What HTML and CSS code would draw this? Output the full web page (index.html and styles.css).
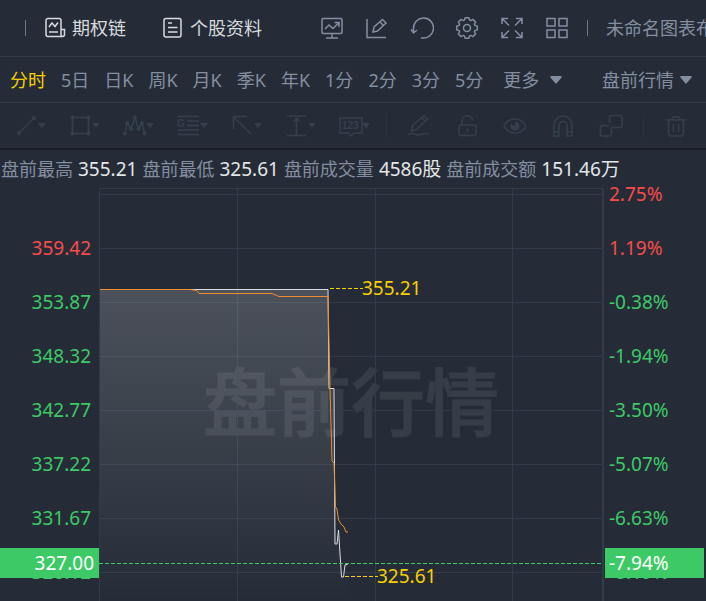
FILE: index.html
```html
<!DOCTYPE html>
<html lang="zh-CN">
<head>
    <meta charset="UTF-8">
    <meta name="viewport" content="width=device-width, initial-scale=1">
    <title>盘前行情</title>
    <link rel="stylesheet" href="styles.css">
</head>
<body>
    <header class="topbar">
        <span class="divider"></span>
        <a class="top-link link-chain" href="#chain">
            <svg class="icon" width="22" height="22" viewBox="0 0 22 22">
                <path d="M17 12V3.500a2 2 0 0 0-2-2H4a2 2 0 0 0-2 2v14a2 2 0 0 0 2 2h14.500a2 2 0 0 0 2-2V12.500H17v5a2 2 0 0 0 2 2"/>
                <path d="M5 10l3-4 3 3.500 3-4M5 15h9"/>
            </svg>
            期权链
        </a>
        <a class="top-link" href="#info">
            <svg class="icon" width="22" height="22" viewBox="0 0 22 22">
                <rect x="2" y="1.500" width="17" height="18.500" rx="2"/>
                <path d="M6 6h4M6 10.500h9.500M6 15h9.500"/>
            </svg>
            个股资料
        </a>
        <div class="top-icons">
            <button class="icon-btn" aria-label="行情看板">
                <svg class="icon" width="24" height="24" viewBox="0 0 24 24">
                    <rect x="2" y="2.500" width="20" height="15" rx="1"/>
                    <path d="M5 13l4-4 4 3.500L18.500 7M14.500 6.500H19V11M12 17.500V22M6 22h12"/>
                </svg>
            </button>
            <button class="icon-btn" aria-label="画线">
                <svg class="icon" width="24" height="24" viewBox="0 0 24 24">
                    <path d="M2 3v18.500h19M8 16l1-5L17.500 3.500l3.500 3.500L12.500 15 8 16zM15 6l3.500 3.500"/>
                </svg>
            </button>
            <button class="icon-btn" aria-label="刷新">
                <svg class="icon" width="24" height="24" viewBox="0 0 24 24">
                    <path d="M3.500 16V12.500A10 10 0 1 1 11 21.700M1 13.500l2.500 3.500L7 14"/>
                </svg>
            </button>
            <button class="icon-btn" aria-label="设置">
                <svg class="icon" width="24" height="24" viewBox="0 0 24 24">
                    <path stroke-linejoin="round" transform="translate(12 12)" d="M10.300-1.800V1.800L7.900 2.600 7.400 3.800 8.600 6 6 8.600 3.800 7.400 2.600 7.900 1.800 10.300H-1.800L-2.600 7.900-3.800 7.400-6 8.600-8.600 6-7.400 3.800-7.900 2.600-10.300 1.800V-1.800L-7.900-2.600-7.400-3.800-8.600-6-6-8.600-3.800-7.400-2.600-7.900-1.800-10.300H1.800L2.600-7.900 3.800-7.400 6-8.600 8.600-6 7.400-3.800 7.900-2.600z"/>
                    <circle cx="12" cy="12" r="3.500"/>
                </svg>
            </button>
            <button class="icon-btn" aria-label="全屏">
                <svg class="icon" width="24" height="24" viewBox="0 0 24 24">
                    <path d="M2 8V2.500h6M2.500 3l6.500 6.500M16 2.500h6V8M21.500 3L15 9.500M2 16v5.500h6M2.500 21L9 14.500M22 16v5.500h-6M21.500 21L15 14.500"/>
                </svg>
            </button>
            <button class="icon-btn" aria-label="多图">
                <svg class="icon" width="24" height="24" viewBox="0 0 24 24">
                    <path d="M2 2.500h8v7.500H2zM14 2.500h8v7.500h-8zM2 14h8v7.500H2zM14 14h8v7.500h-8z"/>
                </svg>
            </button>
        </div>
        <span class="divider"></span>
        <span class="layout-name">未命名图表布局</span>
    </header>

    <nav class="periods">
        <button class="period active">分时</button>
        <button class="period">5日</button>
        <button class="period">日K</button>
        <button class="period">周K</button>
        <button class="period">月K</button>
        <button class="period">季K</button>
        <button class="period">年K</button>
        <button class="period">1分</button>
        <button class="period">2分</button>
        <button class="period">3分</button>
        <button class="period">5分</button>
        <button class="period more">更多
            <svg class="arrow" width="12" height="8" viewBox="0 0 12 8"><path d="M1 0h10l1 1-6 7-6-7z"/></svg>
        </button>
        <button class="period session">盘前行情
            <svg class="arrow" width="12" height="8" viewBox="0 0 12 8"><path d="M1 0h10l1 1-6 7-6-7z"/></svg>
        </button>
    </nav>

    <div class="tools">
        <div class="draw-tools">
            <button class="tool" aria-label="线段">
                <svg class="icon" width="24" height="24" viewBox="0 0 24 24">
                    <path d="M4 19L19 4"/><circle class="dot" cx="4" cy="19" r="2"/><circle class="dot" cx="19" cy="4" r="2"/>
                </svg>
                <svg class="caret" width="8" height="5" viewBox="0 0 8 5"><path d="M0 0h8L4 5z"/></svg>
            </button>
            <button class="tool" aria-label="矩形">
                <svg class="icon" width="24" height="24" viewBox="0 0 24 24">
                    <rect x="3.500" y="3.500" width="16" height="16"/>
                    <circle class="dot" cx="3.500" cy="3.500" r="2"/><circle class="dot" cx="19.500" cy="3.500" r="2"/>
                    <circle class="dot" cx="3.500" cy="19.500" r="2"/><circle class="dot" cx="19.500" cy="19.500" r="2"/>
                </svg>
                <svg class="caret" width="8" height="5" viewBox="0 0 8 5"><path d="M0 0h8L4 5z"/></svg>
            </button>
            <button class="tool" aria-label="波浪">
                <svg class="icon" width="24" height="24" viewBox="0 0 24 24">
                    <path d="M2 19.500L4 9l4 6 4-12 3.500 12L19 9l2.500 10.500"/>
                    <circle class="dot" cx="2" cy="19.500" r="2"/><circle class="dot" cx="4" cy="9" r="2"/>
                    <circle class="dot" cx="8" cy="15" r="2"/><circle class="dot" cx="12" cy="3.500" r="2"/>
                    <circle class="dot" cx="15.500" cy="15" r="2"/><circle class="dot" cx="19" cy="9" r="2"/>
                    <circle class="dot" cx="21.500" cy="19.500" r="2"/>
                </svg>
                <svg class="caret" width="8" height="5" viewBox="0 0 8 5"><path d="M0 0h8L4 5z"/></svg>
            </button>
            <button class="tool" aria-label="江恩">
                <svg class="icon" width="24" height="24" viewBox="0 0 24 24">
                    <path d="M1 2.500h21M10 7h12M10 11.500h12M1 16h21M1 20.500h21"/>
                    <text class="glyph" x="0" y="13" font-size="10">G</text>
                </svg>
                <svg class="caret" width="8" height="5" viewBox="0 0 8 5"><path d="M0 0h8L4 5z"/></svg>
            </button>
            <button class="tool" aria-label="箭头">
                <svg class="icon" width="24" height="24" viewBox="0 0 24 24">
                    <path d="M20 20L2 2.500M2.500 15V2.500H16"/>
                </svg>
                <svg class="caret" width="8" height="5" viewBox="0 0 8 5"><path d="M0 0h8L4 5z"/></svg>
            </button>
            <button class="tool" aria-label="测量">
                <svg class="icon" width="24" height="24" viewBox="0 0 24 24">
                    <path d="M2 2h19M2 21.500h19M11.500 4v17"/><path class="dot" d="M11.500 3l4 4.500h-8z"/>
                </svg>
                <svg class="caret" width="8" height="5" viewBox="0 0 8 5"><path d="M0 0h8L4 5z"/></svg>
            </button>
            <button class="tool" aria-label="标注">
                <svg class="icon" width="24" height="24" viewBox="0 0 24 24">
                    <path d="M1 4h22v15h-8l-3 3-3-3H1z"/>
                    <text class="glyph" x="3" y="15" font-size="10">123</text>
                </svg>
                <svg class="caret" width="8" height="5" viewBox="0 0 8 5"><path d="M0 0h8L4 5z"/></svg>
            </button>
        </div>
        <span class="tool-divider"></span>
        <div class="edit-tools">
            <button class="tool" aria-label="连续画线">
                <svg class="icon" width="24" height="24" viewBox="0 0 24 24">
                    <path d="M4.500 17l1-5.500L17 1.500l3.500 3.500L9.500 15.500zM15 4l3.500 3.500M1.500 20.500c5-3 7 .5 10 .5s5-3 10-.5"/>
                </svg>
            </button>
            <button class="tool" aria-label="锁定">
                <svg class="icon" width="24" height="24" viewBox="0 0 24 24">
                    <rect x="4" y="11" width="17" height="10.500" rx="2"/><path d="M7 11V7.500a5 5 0 0 1 10.500-1M12.500 14.500v3.500"/>
                </svg>
            </button>
            <button class="tool" aria-label="显示">
                <svg class="icon" width="24" height="24" viewBox="0 0 24 24">
                    <path d="M1 12c5-9.500 17-9.500 22 0-5 9.500-17 9.500-22 0z"/>
                    <path class="dot" d="M12 11V7.500a4.500 4.500 0 1 1-4 2.500c1 1 2.500 1.500 4 1z"/>
                </svg>
            </button>
            <button class="tool" aria-label="吸附">
                <svg class="icon" width="24" height="24" viewBox="0 0 24 24">
                    <path d="M3 22V11a9 9 0 0 1 18 0v11h-5V11.500a4 4 0 0 0-8 0V22zM3 18h5M16 18h5"/>
                </svg>
            </button>
            <button class="tool" aria-label="同步">
                <svg class="icon" width="24" height="24" viewBox="0 0 24 24">
                    <path d="M10.500 9V3.500a2 2 0 0 1 2-2H21a2 2 0 0 1 2 2v8a2 2 0 0 1-2 2h-8.500M10 11.500H3.500a2 2 0 0 0-2 2v6.500a2 2 0 0 0 2 2h7a2 2 0 0 0 2-2v-6.500"/>
                </svg>
            </button>
        </div>
        <span class="tool-divider"></span>
        <button class="tool" aria-label="删除">
            <svg class="icon" width="24" height="24" viewBox="0 0 24 24">
                <path d="M2 6h20M8 6l1-3h6l1 3M4.500 6v13a3 3 0 0 0 3 3h9a3 3 0 0 0 3-3V6M9.500 10v8M14.500 10v8"/>
            </svg>
        </button>
    </div>

    <dl class="summary">
        <dt>盘前最高</dt><dd>355.21</dd>
        <dt>盘前最低</dt><dd>325.61</dd>
        <dt>盘前成交量</dt><dd>4586股</dd>
        <dt>盘前成交额</dt><dd>151.46万</dd>
    </dl>

    <main class="chart">
        <div class="axis axis-price">
            <ul class="ticks">
                <li class="up"></li>
                <li class="up">359.42</li>
                <li>353.87</li>
                <li>348.32</li>
                <li>342.77</li>
                <li>337.22</li>
                <li>331.67</li>
                <li>326.12</li>
            </ul>
            <span class="tag">327.00</span>
        </div>

        <svg class="plot" viewBox="0 0 505 413" role="img" aria-label="分时走势">
            <defs>
                <linearGradient id="area" x1="0" y1="0" x2="0" y2="1">
                    <stop offset="0" stop-color="#fff" stop-opacity=".18"/>
                    <stop offset="1" stop-color="#fff" stop-opacity="0"/>
                </linearGradient>
            </defs>
            <text class="watermark" x="104" y="242">盘前行情</text>
            <!-- grid -->
            <path class="grid" d="M0 .5H505M0 6.500H505M0 60.500H505M0 114.500H505M0 168.500H505M0 222.500H505M0 276.500H505M0 330.500H505M0 384.500H505"/>
            <path class="grid" d="M.5 0V413M138.500 0V413M276.500 0V413M413.500 0V413M503.500 0V413M504.500 0V413"/>
            <!-- price -->
            <path fill="url(#area)" d="M1 101.500H229L230 200.500H235L237 356H239L240 342L243 389H245L247 377L249 376V413H1z"/>
            <path class="line price" d="M1 101.500H229L230 200.500H235L236 356H238L239.500 342L242.500 389H244.500L246 377L249 376"/>
            <!-- average -->
            <path class="line average" d="M1 101.500H91L98 102.500L100 105.500H173L180 108.500H229L231 200L233 273L235 275L236.500 319L238 321L239.500 332L242 336L245 339L247 344H249"/>
            <!-- last price, high and low -->
            <path class="last" d="M0 375.500H503"/>
            <path class="mark" d="M231 100.500H264M246 388.500H279"/>
            <text class="mark-text" x="263" y="107">355.21</text>
            <text class="mark-text" x="278" y="395">325.61</text>
        </svg>

        <div class="axis axis-percent">
            <ul class="ticks">
                <li class="up">2.75%</li>
                <li class="up">1.19%</li>
                <li>-0.38%</li>
                <li>-1.94%</li>
                <li>-3.50%</li>
                <li>-5.07%</li>
                <li>-6.63%</li>
                <li>-8.19%</li>
            </ul>
            <span class="tag">-7.94%</span>
        </div>
    </main>
</body>
</html>
```

FILE: styles.css
```css
* {
    box-sizing: border-box;
}

body {
    margin: 0;
    background-color: #252c37;
    color: #848ea1;
    font-family: "Noto Sans", "Noto Sans CJK SC", sans-serif;
    font-size: 18px;
    line-height: 24px;
    overflow: hidden;
}

button {
    padding: 0;
    border: 0;
    background: none;
    color: inherit;
    font: inherit;
    white-space: nowrap;
    cursor: pointer;
}

.icon {
    display: block;
    flex-shrink: 0;
    fill: none;
    stroke: currentColor;
    stroke-width: 1.5;
}

/* top bar */
.topbar {
    display: flex;
    align-items: center;
    height: 57px;
    padding-left: 25px;
    border-bottom: 1px solid #303c49;
    white-space: nowrap;
}

.divider {
    flex-shrink: 0;
    width: 1px;
    height: 16px;
    background-color: #6d7788;
}

.top-link {
    display: flex;
    align-items: center;
    gap: 6px;
    margin-left: 36px;
    color: #d7dade;
    text-decoration: none;
}

.link-chain {
    margin-left: 18px;
}

.top-icons {
    display: flex;
    gap: 21px;
    margin: 0 18px 0 58px;
}

.layout-name {
    margin-left: 18px;
}

/* periods */
.periods {
    display: flex;
    align-items: center;
    gap: 15px;
    height: 46px;
    padding: 0 14px 0 10px;
    border-bottom: 1px solid #303c49;
}

.period.active {
    color: #f8cf00;
}

.more,
.session {
    display: flex;
    align-items: center;
    gap: 11px;
}

.more {
    margin-left: 5px;
}

.session {
    gap: 6px;
    margin-left: auto;
}

.arrow,
.caret {
    fill: currentColor;
}

/* drawing tools */
.tools {
    display: flex;
    align-items: center;
    height: 47px;
    padding: 0 15px;
    border-bottom: 2px solid #181d24;
    color: #35404d;
}

.draw-tools,
.edit-tools {
    display: flex;
    gap: 23px;
}

.edit-tools {
    gap: 24px;
    margin-right: 4px;
}

.tool {
    display: flex;
    align-items: center;
}

.tool .dot,
.tool .glyph {
    fill: currentColor;
    stroke: none;
}

.tool .glyph {
    font-family: "Liberation Sans", sans-serif;
    font-weight: bold;
}

.caret {
    margin-left: -1px;
}

.tool-divider {
    width: 1px;
    height: 22px;
    margin: 0 20px 0 16px;
    background-color: #2b333f;
}

/* pre-market summary */
.summary {
    display: flex;
    align-items: center;
    gap: 5px;
    height: 38px;
    margin: 0;
    padding-left: 1px;
    white-space: nowrap;
}

.summary dd {
    margin: 0;
    color: #e4e6e8;
    font-size: 19px;
}

/* chart */
.chart {
    display: grid;
    grid-template-columns: 99px 1fr 102px;
}

.axis {
    position: relative;
    color: #3dc966;
    font-size: 19px;
}

.ticks {
    margin: 0;
    padding: 0;
    list-style: none;
}

.ticks li {
    height: 54px;
    line-height: 12px;
}

.ticks .up {
    color: #f84b4b;
}

.axis-price {
    text-align: right;
}

.axis-price .ticks {
    padding-right: 8px;
}

.axis-percent .ticks {
    padding-left: 5px;
}

.tag {
    position: absolute;
    top: 360px;
    left: 0;
    right: 0;
    padding-right: 5px;
    background-color: #3dc966;
    color: #fff;
    line-height: 30px;
}

.axis-percent .tag {
    left: 1px;
    right: 2px;
    padding-left: 4px;
}

.plot {
    display: block;
    width: 100%;
}

.grid {
    fill: none;
    stroke: #303c49;
}

.watermark {
    fill: #fff;
    stroke: #fff;
    opacity: .08;
    font-size: 74px;
    font-weight: 500;
}

.line {
    fill: none;
}

.price {
    stroke: #d9dbde;
}

.average {
    stroke: #f08c2e;
}

.last {
    stroke: #3dc966;
    stroke-dasharray: 4 2;
}

.mark {
    stroke: #f8cf00;
    stroke-dasharray: 4 2;
}

.mark-text {
    fill: #f8cf00;
    font-size: 19px;
}
```
